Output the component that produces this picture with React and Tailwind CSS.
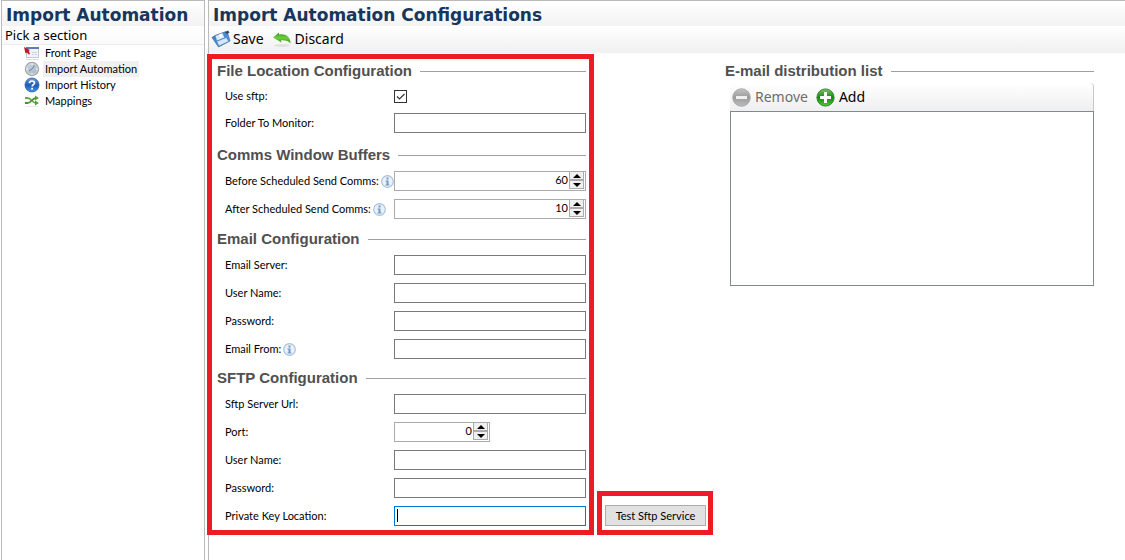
import { useState } from "react";

function FrontPageIcon() {
  return (
    <svg width="16" height="14" viewBox="0 0 16 14">
      <rect x="2.500" y="2.500" width="12" height="9" fill="#f1f5fb" stroke="#c3cad6" />
      <rect x="2" y="1" width="13" height="2" fill="#5f7db5" />
      <path d="M8 6.500h5M8 8.500h2M11 8.500h2" stroke="#c9d3e4" />
      <path d="M0 1l6 3-1.200 1L6 8 4.500 8.500 3 6.500 1.500 7.500z" fill="#c11a2b" />
      <path d="M2 13.500h13" stroke="#dddddd" />
    </svg>
  );
}

function ClockIcon() {
  return (
    <svg width="16" height="16" viewBox="0 0 16 16">
      <defs>
        <linearGradient id="clock" x1="0" y1="0" x2="1" y2="1">
          <stop offset="0" stopColor="#cbd8e3" />
          <stop offset="1" stopColor="#a2b4c4" />
        </linearGradient>
      </defs>
      <circle cx="8" cy="8" r="6.500" fill="url(#clock)" stroke="#a3a6a9" strokeWidth="1.400" />
      <circle cx="8" cy="8" r="5.500" fill="none" stroke="#dfe5ea" strokeWidth=".6" />
      <path d="M8 8L10.500 4.500M8 8L5 10" stroke="#75818c" fill="none" />
      <path d="M8 2.500v1.500M8 12v1.500M2.500 8H4M12 8h1.500" stroke="#fff" />
    </svg>
  );
}

function HelpIcon() {
  return (
    <svg width="16" height="16" viewBox="0 0 16 16">
      <defs>
        <linearGradient id="help" x1="0" y1="0" x2="0" y2="1">
          <stop offset="0" stopColor="#6fa3e0" />
          <stop offset=".5" stopColor="#1d58b4" />
          <stop offset="1" stopColor="#3f9be8" />
        </linearGradient>
      </defs>
      <circle cx="8" cy="8" r="7" fill="url(#help)" stroke="#2a5a9c" strokeWidth=".8" />
      <path d="M5.500 6.200C5.500 3.300 10.500 3.300 10.500 6c0 1.600-2.400 1.700-2.400 3.600" fill="none" stroke="#fff" strokeWidth="1.700" />
      <rect x="7.200" y="10.800" width="1.800" height="1.800" fill="#fff" />
    </svg>
  );
}

function MappingsIcon() {
  return (
    <svg width="16" height="14" viewBox="0 0 16 14">
      <path d="M1 4h2.500c4 0 4.500 5 8.500 5" fill="none" stroke="#6aa84a" strokeWidth="1.800" />
      <path d="M1 9h2.500c4 0 4.500-5 8.500-5" fill="none" stroke="#4b8f30" strokeWidth="1.800" />
      <path d="M11 1.500L15 4l-4 2.500zM11 6.500L15 9l-4 2.500z" fill="#57a038" />
      <path d="M2 12.500h12" stroke="#e6eae4" />
    </svg>
  );
}

function SaveIcon() {
  return (
    <svg width="20" height="18" viewBox="0 0 20 18">
      <defs>
        <linearGradient id="disk" x1="0" y1="0" x2="1" y2="1">
          <stop offset="0" stopColor="#3f78bd" />
          <stop offset="1" stopColor="#5f9fdc" />
        </linearGradient>
      </defs>
      <path d="M1 7.500L4 5.500 15 1.500l1.500 1L19 11 7.500 17z" fill="url(#disk)" stroke="#3b6ca8" strokeWidth=".7" />
      <path d="M4.500 6L11.500 3.200l1.800 4.300L6 10.500z" fill="#dce9f6" />
      <path d="M8 4.500l2.500-1 1.200 3.200-2.500 1z" fill="#ffffff" />
      <path d="M6.300 11.500L15.200 8 17.300 11.300 8 15.600z" fill="#d4e8fa" />
      <path d="M14 2.500l3-2 1.500 2-2.500 1.500z" fill="#2b4666" />
    </svg>
  );
}

function DiscardIcon() {
  return (
    <svg width="20" height="18" viewBox="0 0 20 18">
      <defs>
        <linearGradient id="undo" x1="0" y1="0" x2="0" y2="1">
          <stop offset="0" stopColor="#2f9a1c" />
          <stop offset=".5" stopColor="#6fcf3f" />
          <stop offset="1" stopColor="#2c8d18" />
        </linearGradient>
      </defs>
      <ellipse cx="10" cy="15.500" rx="8" ry="1.500" fill="#dfe2dd" />
      <path d="M1 7.500L7 2.500v2C13 3.500 18.500 6 18.500 13.500 16.500 11 14 10 9 10.200L9.500 12.500z" fill="url(#undo)" />
    </svg>
  );
}

function InfoIcon() {
  return (
    <svg width="13" height="13" viewBox="0 0 13 13" className="shrink-0">
      <circle cx="6.500" cy="6.500" r="5.800" fill="#eaf1f8" stroke="#a9c1dc" strokeWidth="1.200" />
      <rect x="5.500" y="2.500" width="2" height="2" fill="#6f98c6" />
      <path d="M4.500 5.500h3v4h1v1h-4v-1h1v-3h-1z" fill="#6f98c6" />
    </svg>
  );
}

function RemoveIcon() {
  return (
    <svg width="19" height="19" viewBox="0 0 19 19">
      <defs>
        <linearGradient id="minus" x1="0" y1="0" x2="0" y2="1">
          <stop offset="0" stopColor="#c4c4c4" />
          <stop offset=".5" stopColor="#9b9b9b" />
          <stop offset="1" stopColor="#bdbdbd" />
        </linearGradient>
      </defs>
      <circle cx="9.500" cy="9.500" r="8.800" fill="url(#minus)" stroke="#a2a2a2" strokeWidth=".8" />
      <rect x="4" y="8" width="11" height="3" fill="#efefef" />
    </svg>
  );
}

function AddIcon() {
  return (
    <svg width="19" height="19" viewBox="0 0 19 19">
      <defs>
        <linearGradient id="plus" x1="0" y1="0" x2="0" y2="1">
          <stop offset="0" stopColor="#7fc06f" />
          <stop offset=".5" stopColor="#138a0c" />
          <stop offset="1" stopColor="#4ccb33" />
        </linearGradient>
      </defs>
      <circle cx="9.500" cy="9.500" r="8.600" fill="url(#plus)" stroke="#2c7a26" strokeWidth=".9" />
      <path d="M8 4h3v4h4v3h-4v4H8v-4H4V8h4z" fill="#fff" />
    </svg>
  );
}

const sections = [
  { name: "Front Page", icon: <FrontPageIcon /> },
  { name: "Import Automation", icon: <ClockIcon />, active: true },
  { name: "Import History", icon: <HelpIcon /> },
  { name: "Mappings", icon: <MappingsIcon /> },
];

function Title({ children }) {
  return (
    <h1 className="h-[25px] pl-1 pt-0.5 flex items-center bg-linear-to-b from-white to-[#f3f3f3] font-[DejaVu_Sans,Verdana,sans-serif] text-[17px] font-bold text-[#17365d] whitespace-nowrap">
      {children}
    </h1>
  );
}

function Heading({ children }) {
  return (
    <h2 className="h-6 flex items-center gap-2 font-[Liberation_Sans,Arial,sans-serif] text-[15px] font-bold text-[#505050] whitespace-nowrap">
      {children}
      <span className="flex-1 h-px bg-[#a0a0a0]" />
    </h2>
  );
}

function Row({ id, label, info, children }) {
  return (
    <div className="h-7 pl-2 flex items-center">
      <div className="w-[169px] shrink-0 flex items-center gap-0.5 whitespace-nowrap">
        <label htmlFor={id}>{label}</label>
        {info && <InfoIcon />}
      </div>
      {children}
    </div>
  );
}

function TextRow({ id, label, info, type = "text", focused }) {
  return (
    <Row id={id} label={label} info={info}>
      <div className="relative flex-1 flex">
        <input
          id={id}
          type={type}
          className={
            focused
              ? "w-full h-5 px-1 border border-[#0078d7] bg-white outline-none"
              : "w-full h-5 px-1 border border-[#7a7a7a] bg-white outline-none focus:border-[#0078d7]"
          }
        />
        {focused && <span className="absolute left-[3px] top-[3px] w-px h-[13px] bg-black" />}
      </div>
    </Row>
  );
}

function NumberRow({ id, label, info, initial, small }) {
  const [value, setValue] = useState(initial);

  return (
    <Row id={id} label={label} info={info}>
      <div className={small ? "w-24 h-5 flex border border-[#ababab] bg-white" : "flex-1 h-5 flex border border-[#ababab] bg-white"}>
        <input
          id={id}
          type="number"
          value={value}
          onChange={(e) => setValue(Number(e.target.value))}
          className="flex-1 min-w-0 pr-px text-right leading-4 pb-0.5 outline-none [appearance:textfield] [&::-webkit-inner-spin-button]:appearance-none"
        />
        <div className="w-[15px] mr-px mb-px flex flex-col border border-[#ababab] border-t-0 bg-[#f0f0f0]">
          <button type="button" aria-label="Increase" onClick={() => setValue(value + 1)} className="flex-1 flex items-center justify-center border-b-2 border-[#ababab]">
            <svg width="8" height="4" viewBox="0 0 8 4"><path d="M0 4L4 0l4 4z" /></svg>
          </button>
          <button type="button" aria-label="Decrease" onClick={() => setValue(value - 1)} className="flex-1 flex items-center justify-center">
            <svg width="8" height="4" viewBox="0 0 8 4"><path d="M0 0l4 4 4-4z" /></svg>
          </button>
        </div>
      </div>
    </Row>
  );
}

export default function App() {
  const [useSftp, setUseSftp] = useState(true);

  return (
    <div className="min-h-screen pl-px flex gap-[3px] bg-white font-[Lato,Arial,sans-serif] text-[11px] leading-4 text-black">
      <aside className="w-[204px] shrink-0 border border-b-0 border-[#bababa]">
        <Title>Import Automation</Title>
        <p className="h-[19px] pl-[3px] flex items-center border-b border-[#ececec] bg-linear-to-b from-white to-[#fafafa] font-[Noto_Sans,Tahoma,sans-serif] text-[13px]">
          Pick a section
        </p>
        <nav className="pl-[22px] flex flex-col">
          {sections.map((s) => (
            <a key={s.name} href="#" className="h-4 flex items-center gap-[3px] whitespace-nowrap">
              <span className="w-4 flex justify-center">{s.icon}</span>
              <span className={s.active ? "px-0.5 bg-[#f0f0f0]" : "px-0.5"}>{s.name}</span>
            </a>
          ))}
        </nav>
      </aside>

      <main className="flex-1 border-l border-t border-[#bababa]">
        <Title>Import Automation Configurations</Title>
        <div className="h-[27px] pl-0.5 pb-0.5 flex items-center gap-2 bg-linear-to-b from-white to-[#f0f0f0] font-[Noto_Sans,Tahoma,sans-serif] text-sm">
          <button type="button" className="flex items-center gap-0.5">
            <SaveIcon />
            Save
          </button>
          <button type="button" className="flex items-center gap-[3px]">
            <DiscardIcon />
            Discard
          </button>
        </div>

        <div className="-ml-0.5 pt-px flex">
          <form className="w-[387px] shrink-0 pl-[5px] pr-[3px] border-5 border-[#ed1c24]">
            <section>
              <Heading>File Location Configuration</Heading>
              <div className="h-[26px] pl-2 flex items-center">
                <label htmlFor="useSftp" className="w-[169px]">Use sftp:</label>
                <div className="relative flex">
                  <input
                    id="useSftp"
                    type="checkbox"
                    checked={useSftp}
                    onChange={(e) => setUseSftp(e.target.checked)}
                    className="w-[13px] h-[13px] appearance-none border border-[#333333] bg-white"
                  />
                  {useSftp && (
                    <svg width="13" height="13" viewBox="0 0 13 13" className="absolute inset-0 pointer-events-none">
                      <path d="M3 6.500L5.500 9 10.500 4" fill="none" stroke="#333" strokeWidth="1.200" />
                    </svg>
                  )}
                </div>
              </div>
              <TextRow id="folder" label="Folder To Monitor:" />
            </section>

            <section className="mt-1.5">
              <Heading>Comms Window Buffers</Heading>
              <NumberRow id="before" label="Before Scheduled Send Comms:" info initial={60} />
              <NumberRow id="after" label="After Scheduled Send Comms:" info initial={10} />
            </section>

            <section className="mt-1">
              <Heading>Email Configuration</Heading>
              <TextRow id="emailServer" label="Email Server:" />
              <TextRow id="emailUser" label="User Name:" />
              <TextRow id="emailPassword" label="Password:" type="password" />
              <TextRow id="emailFrom" label="Email From:" info />
            </section>

            <section className="mt-[3px]">
              <Heading>SFTP Configuration</Heading>
              <TextRow id="sftpUrl" label="Sftp Server Url:" />
              <NumberRow id="port" label="Port:" initial={0} small />
              <TextRow id="sftpUser" label="User Name:" />
              <TextRow id="sftpPassword" label="Password:" type="password" />
              <TextRow id="privateKey" label="Private Key Location:" focused />
            </section>
          </form>

          <div className="self-end ml-[3px] shrink-0 pl-[3px] pr-0.5 pt-[9px] pb-1 border-5 border-[#ed1c24]">
            <button type="button" className="w-[101px] h-[21px] flex items-center justify-center border border-[#adadad] bg-[#e1e1e1] whitespace-nowrap">
              Test Sftp Service
            </button>
          </div>

          <section className="flex-1 ml-3 mr-[31px] pt-[5px]">
            <Heading>E-mail distribution list</Heading>
            <div className="ml-[5px]">
              <div className="h-7 pl-0.5 flex items-center gap-2 rounded-tr border-r border-[#c8c8c8] bg-linear-to-b from-white to-[#efefef] font-[Noto_Sans,Tahoma,sans-serif] text-sm">
                <button type="button" disabled className="flex items-center gap-1 text-[#6d6d6d]">
                  <RemoveIcon />
                  Remove
                </button>
                <button type="button" className="flex items-center gap-1">
                  <AddIcon />
                  Add
                </button>
              </div>
              <select multiple aria-label="E-mail distribution list" className="block w-full h-[175px] border border-[#828790] bg-white outline-none" />
            </div>
          </section>
        </div>
      </main>
    </div>
  );
}
